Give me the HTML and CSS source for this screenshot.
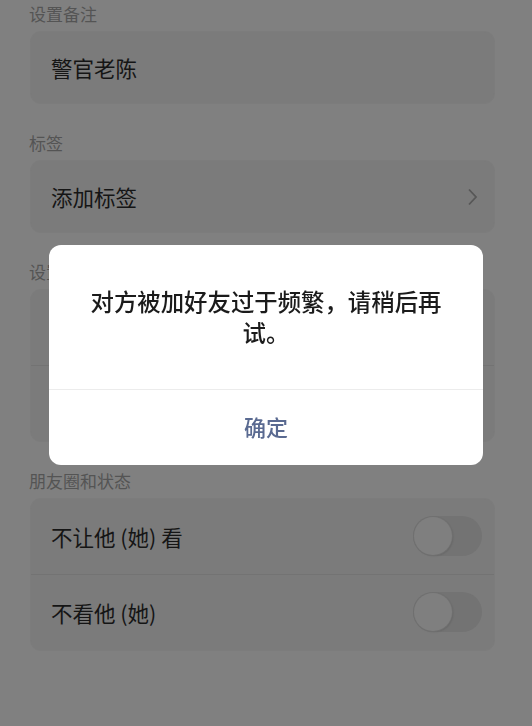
FILE: index.html
```html
<!DOCTYPE html>
<html lang="zh-CN">
<head>
    <meta charset="UTF-8">
    <meta name="viewport" content="width=device-width, initial-scale=1.0">
    <title>资料设置</title>
    <link rel="stylesheet" href="styles.css">
</head>
<body>
    <div class="page">
        <div class="section-title first">设置备注</div>
        <div class="card">
            <div class="row">警官老陈</div>
        </div>

        <div class="section-title">标签</div>
        <div class="card">
            <div class="row">
                <span>添加标签</span>
                <svg class="chevron" width="12" height="18" viewBox="0 0 12 18">
                    <polyline points="3,1.5 10,9 3,16.5" fill="none" stroke="#575757" stroke-width="1.8"/>
                </svg>
            </div>
        </div>

        <div class="section-title">设置朋友权限</div>
        <div class="card">
            <div class="row tall"></div>
            <div class="row tall"></div>
        </div>

        <div class="section-title">朋友圈和状态</div>
        <div class="card">
            <div class="row tall">
                <span>不让他 (她) 看</span>
                <div class="switch"><div class="knob"></div></div>
            </div>
            <div class="row tall">
                <span>不看他 (她)</span>
                <div class="switch"><div class="knob"></div></div>
            </div>
        </div>
    </div>

    <div class="dialog">
        <div class="dialog-body">对方被加好友过于频繁，请稍后再试。</div>
        <div class="dialog-btn">确定</div>
    </div>
</body>
</html>
```

FILE: styles.css
```css
body {
    margin: 0;
    background-color: #808080;
    font-family: "Noto Sans CJK SC", "Noto Sans", sans-serif;
    width: 532px;
    height: 726px;
    overflow: hidden;
}
.page {
    padding: 0 38px 0 31px;
}
.section-title {
    font-size: 17px;
    line-height: 28px;
    color: #545454;
    margin-top: 26px;
    margin-bottom: 4px;
    margin-left: -2px;
}
.section-title.first {
    margin-top: 0;
}
.card {
    background-color: #7b7b7b;
    border-radius: 10px;
    box-shadow: 0 0 0 1px rgba(118,118,118,0.4);
}
.row {
    display: flex;
    align-items: center;
    justify-content: space-between;
    height: 71px;
    padding: 0 12px 0 20px;
    font-size: 21.5px;
    color: #151515;
}
.row.tall {
    height: 75px;
}
.row + .row {
    border-top: 1px solid #737373;
}
.chevron {
    margin-right: 4px;
}
.switch {
    width: 69px;
    height: 40px;
    border-radius: 20px;
    background-color: #737373;
    position: relative;
    margin-top: -2px;
}
.knob {
    position: absolute;
    left: 1px;
    top: 1px;
    width: 38px;
    height: 38px;
    border-radius: 50%;
    background-color: #7f7f7f;
    box-shadow: 0 0 0 1px #707070, 1px 1px 2px rgba(0,0,0,0.15);
}
.dialog {
    position: fixed;
    left: 49px;
    top: 245px;
    width: 434px;
    height: 220px;
    background-color: #ffffff;
    border-radius: 12px;
    display: flex;
    flex-direction: column;
    overflow: hidden;
}
.dialog-body {
    height: 144px;
    display: flex;
    align-items: center;
    justify-content: center;
    text-align: center;
    padding: 0 35px;
    font-size: 23.4px;
    line-height: 31px;
    font-weight: 500;
    color: #1b1b1b;
}
.dialog-btn {
    flex: 1;
    border-top: 1px solid #ececec;
    display: flex;
    align-items: center;
    justify-content: center;
    font-size: 22px;
    color: #5a6a91;
    font-weight: 500;
    padding-bottom: 3px;
}
```
